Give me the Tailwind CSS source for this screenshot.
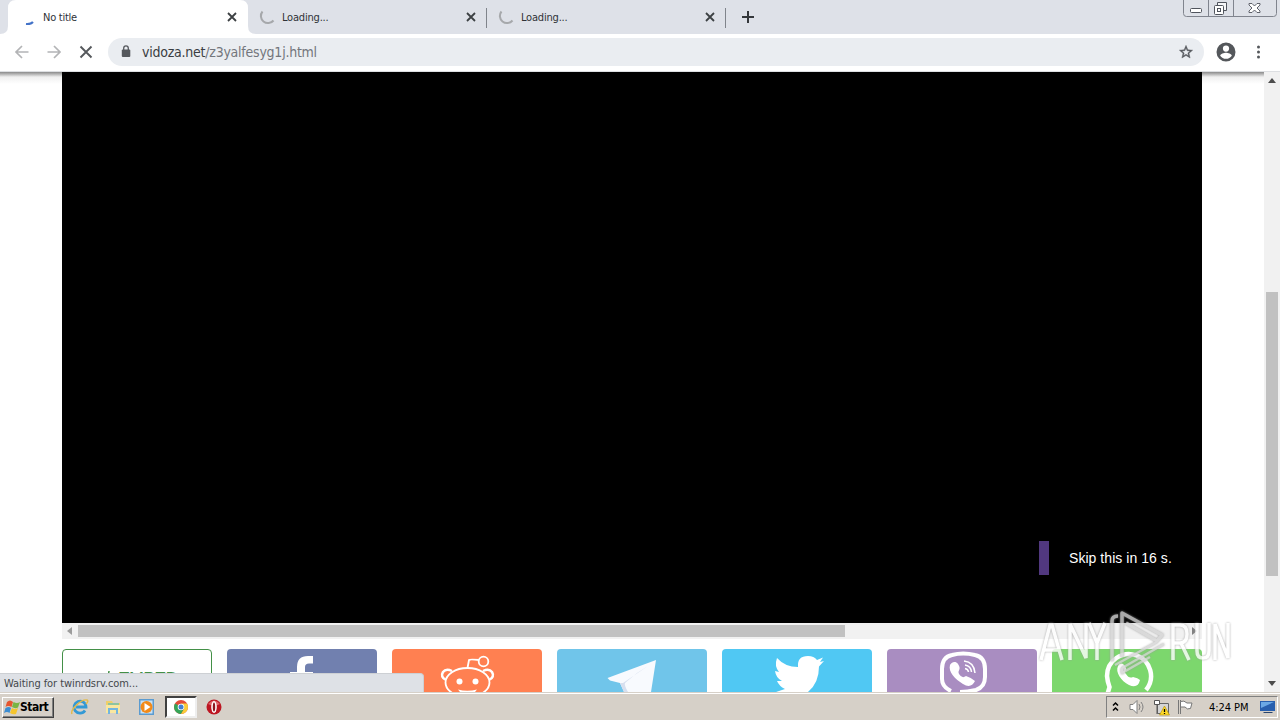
<!DOCTYPE html>
<html lang="en">
<head>
    <meta charset="UTF-8">
    <meta name="viewport" content="width=device-width, initial-scale=1.0">
    <title>No title</title>
    <script src="https://cdn.jsdelivr.net/npm/@tailwindcss/browser@4"></script>
</head>
<body class="w-[1280px] h-[720px] overflow-hidden flex flex-col bg-white font-['DejaVu_Sans_Condensed','DejaVu_Sans',sans-serif]">

    <!-- Tab strip -->
    <header class="relative h-[34px] shrink-0 bg-[#dee1e8] flex text-[11px] text-[#2f3237]">
        <svg class="absolute left-0 top-0" width="256" height="34"><path d="M0 34 Q8 34 8 26 V8 Q8 0 16 0 H240 Q248 0 248 8 V26 Q248 34 256 34Z" fill="#fff"/></svg>
        <div class="relative w-[248px] flex items-center pl-5 pr-[11px]">
            <svg class="w-4 h-4 mr-[7px]" viewBox="0 0 16 16" fill="none"><path d="M6 15Q10.500 15.500 13 13" stroke="#4272c8" stroke-width="2.200"/></svg>
            <span class="flex-1 pt-[2px] tracking-[-0.25px]">No title</span>
            <svg width="10" height="10" viewBox="0 0 10 10" stroke="#3c4043" stroke-width="1.800"><path d="M1 1l8 8M9 1l-8 8"/></svg>
        </div>
        <div class="relative w-[239px] flex items-center pl-[11px] pr-[11px]">
            <svg class="w-4 h-4 mr-[7px]" viewBox="0 0 16 16" fill="none"><path d="M3.500 2.500A7 7 0 1 0 14.500 11.500" stroke="#a6a8ab" stroke-width="2"/></svg>
            <span class="flex-1 pt-[2px] tracking-[-0.2px]">Loading...</span>
            <svg width="10" height="10" viewBox="0 0 10 10" stroke="#3c4043" stroke-width="1.800"><path d="M1 1l8 8M9 1l-8 8"/></svg>
            <i class="absolute right-0 top-2 w-px h-5 bg-[#80848b]"></i>
        </div>
        <div class="relative w-[239px] flex items-center pl-[11px] pr-[11px]">
            <svg class="w-4 h-4 mr-[7px]" viewBox="0 0 16 16" fill="none"><path d="M3.500 2.500A7 7 0 1 0 14.500 11.500" stroke="#a6a8ab" stroke-width="2"/></svg>
            <span class="flex-1 pt-[2px] tracking-[-0.2px]">Loading...</span>
            <svg width="10" height="10" viewBox="0 0 10 10" stroke="#3c4043" stroke-width="1.800"><path d="M1 1l8 8M9 1l-8 8"/></svg>
            <i class="absolute right-0 top-2 w-px h-5 bg-[#80848b]"></i>
        </div>
        <svg class="mt-[11px] ml-4" width="12" height="12" stroke="#34373b" stroke-width="2"><path d="M6 0v12M0 6h12"/></svg>
        <!-- Window buttons -->
        <svg class="ml-auto mr-[3px]" width="94" height="18" fill="none" stroke="#80848e">
            <path d="M.5 0V13.500Q.5 16.500 3.500 16.500H90.500Q93.500 16.500 93.500 13.500V0M25.500 0V16M50.500 0V16"/>
            <g stroke="#50545d">
                <rect x="7.500" y="8.500" width="11" height="4" rx="1" fill="#fff"/>
                <path d="M34.500 6V2.500H43.500V10.500H40" fill="#f5f6f8"/>
                <rect x="31.500" y="5.500" width="9" height="9" rx="1" fill="#fff"/><rect x="34.500" y="8.500" width="3" height="3"/>
                <path d="M66 3.500h3l2.500 2.500 2.500-2.500h3v1.500L74 8l3 3v1.500h-3L71.500 10 69 12.500h-3V11l3-3-3-3z" fill="#fff" stroke-width=".9"/>
            </g>
        </svg>
    </header>

    <!-- Toolbar -->
    <div class="relative z-10 h-[38px] shrink-0 bg-white flex items-center pb-[2px] border-b border-[#dddfe2]">
        <svg width="108" height="36" fill="none" stroke-width="1.700">
            <path d="M28.500 18H16M22 12l-6 6 6 6M47.500 18H60M54 12l6 6-6 6" stroke="#b3b4b6"/>
            <path d="M80.500 12.500l11 11M91.500 12.500l-11 11" stroke="#55585c" stroke-width="1.900"/>
        </svg>
        <div class="w-[1096px] h-7 rounded-full bg-[#eaedf1] flex items-center pl-[13px] pr-[10px]">
            <svg class="mr-[11px]" width="10" height="13"><path d="M2.700 5V3.200a2.300 2.300 0 0 1 4.600 0V5" fill="none" stroke="#55585d" stroke-width="1.300"/><rect x=".8" y="4.500" width="8.500" height="7.500" rx="1" fill="#55585d"/></svg>
            <span class="flex-1 pt-[2px] text-[14px] tracking-[-0.24px] text-[#73767c]"><span class="text-[#3a3d42]">vidoza.net</span>/z3yalfesyg1j.html</span>
            <svg width="16" height="16" viewBox="0 0 24 24" fill="#55585d" stroke="#55585d" stroke-width=".6"><path d="M22 9.240l-7.190-.62L12 2 9.190 8.630 2 9.240l5.460 4.730L5.820 21 12 17.270 18.180 21l-1.630-7.030zM12 15.400l-3.760 2.270 1-4.280-3.320-2.880 4.380-.38L12 6.100l1.710 4.040 4.380.38-3.320 2.880 1 4.280z"/></svg>
        </div>
        <svg class="ml-[10px]" width="24" height="24" viewBox="0 0 24 24" fill="#54575b"><path d="M12 2.500a9.500 9.500 0 1 0 0 19 9.500 9.500 0 0 0 0-19zm0 3a3.100 3.100 0 1 1 0 6.200 3.100 3.100 0 0 1 0-6.200zm0 13.300a7 7 0 0 1-5.800-3.100c.1-1.900 3.900-2.900 5.800-2.900s5.700 1 5.800 2.900a7 7 0 0 1-5.800 3.100z"/></svg>
        <svg class="ml-[18px]" width="5" height="16" fill="#54575b"><circle cx="2.500" cy="3" r="1.500"/><circle cx="2.500" cy="8" r="1.500"/><circle cx="2.500" cy="13" r="1.500"/></svg>
    </div>

    <!-- Page -->
    <main class="relative h-[620px] shrink-0 flex overflow-hidden">
        <div class="w-[1264px] pl-[62px] bg-linear-to-b from-[#8b8b8b] via-[#f0f0f0] via-[5px] to-white to-[12px]">
            <div class="w-[1140px] h-[551px] bg-black flex items-end">
                <div class="ml-[977px] mb-12 flex items-center h-[34px] border-l-[10px] border-[#51387f] pl-5 font-['Liberation_Sans',sans-serif] text-[14px] tracking-[0.05px] text-white whitespace-nowrap">Skip this in 16 s.</div>
            </div>
            <div class="w-[1140px] h-4 bg-[#f1f1f1] flex items-center justify-between px-[5px]">
                <svg width="6" height="8"><path d="M5 0v8L0 4z" fill="#9c9c9c"/></svg>
                <i class="mr-auto ml-[5px] w-[767px] h-3 bg-[#c1c1c1]"></i>
                <svg width="6" height="8"><path d="M1 0v8l5-4z" fill="#808080"/></svg>
            </div>
            <div class="mt-[10px] w-[1140px] grid grid-cols-7 gap-[15px]">
                <div class="h-[54px] rounded-[4px] border border-[#439047] text-[#439047] font-['Liberation_Sans',sans-serif] text-[18px] leading-6 pt-[17px] pl-[43px] flex items-start">
                    <svg class="mt-[4px] mr-[4px]" width="8" height="10"><path d="M3 0L0 9M3 0v4" stroke="#439047"/></svg>
                    <span class="tracking-[-0.9px]">EMBED</span>
                </div>
                <div class="h-[54px] rounded-[4px] bg-[#7180af]"><svg width="150" height="43"><path d="M86 7V14.500H82Q78 14.500 78 18V23H86V31H78V43H70V31H63V23H70V18Q70 7 81 7Z" fill="#fff"/></svg></div>
                <div class="h-[54px] rounded-[4px] bg-[#ff8051]"><svg width="150" height="43" fill="none" stroke="#fff" stroke-width="1.800">
                    <path d="M75.500 19L77 11Q78 10 87 11"/><circle cx="91.500" cy="12.500" r="4.800"/>
                    <path d="M54 31Q48 28 51 23Q54 19 60 22M97 31Q103 28 100 23Q97 19 91 22" stroke-width="2.500"/>
                    <ellipse cx="75.500" cy="33.500" rx="22" ry="14.500"/><g fill="#fff" stroke="none"><circle cx="67.500" cy="32.500" r="3"/><circle cx="83.500" cy="32.500" r="3"/><path d="M66 40.500Q75 43 85 40.500L83 43H68Z"/></g>
                </svg></div>
                <div class="h-[54px] rounded-[4px] bg-[#70c5ea]"><svg width="150" height="43"><path d="M99 11L50.500 29L53 31.500L63 34L67 43H94Z" fill="#f8fafe"/><path d="M91 17L66 34L63 34L67 43H71Q67 36 68 34L80 24Z" fill="#d7dfef"/></svg></div>
                <div class="h-[54px] rounded-[4px] bg-[#50c8f3]"><svg width="150" height="43"><path d="M55 9Q63 18 76 18Q75 7 86 7Q92 7 95 11L101 8.500L98 13L102 12L97 17.500Q97 34 86 43H54L63 40Q57 37 55 32L60 32Q54 29 53 22L57 23Q52 17 55 9Z" fill="#fff"/></svg></div>
                <div class="h-[54px] rounded-[4px] bg-[#a98dc1]"><svg width="150" height="43" fill="none" stroke="#fff" stroke-width="4">
                    <path d="M64 42Q55 38 55 30V20Q55 8 65 6Q76 3 88 6Q98 8 98 20V28Q98 38 89 41Q80 43 73 43"/>
                    <path d="M63 16C64 14 68 11 71 15C75 21 70 21 72 25Q75 30 79 27Q85 29 88 32Q84 40 76 35C68 30 61 23 63 16Z" fill="#fff" stroke="none"/><path d="M77 12Q87 13 88 24M78 16Q84 17 84.500 23M78 19.500Q81 20 81.500 23" stroke-width="1.500"/>
                </svg></div>
                <div class="h-[54px] rounded-[4px] bg-[#7cd76d]"><svg width="150" height="43" fill="none" stroke="#fff" stroke-width="4.500">
                    <path d="M55.500 45L57.500 38Q55.500 33 55 27A22 22 0 1 1 94 41"/>
                    <path d="M66 17C68 13 72 14 74 19C75 22 71 22 74 25Q77 30 81 28Q86 29 88 31Q86 40 77 36C69 32 63 23 66 17Z" fill="#fff" stroke="none"/>
                </svg></div>
            </div>
        </div>
        <!-- Scrollbar -->
        <div class="w-4 h-full bg-[#f1f1f1] flex flex-col items-center justify-between py-[6px]">
            <svg width="8" height="5"><path d="M0 5h8L4 0z" fill="#4d4d4d"/></svg>
            <i class="w-3 h-[284px] mt-[209px] mb-auto bg-[#c1c1c1]"></i>
            <svg width="8" height="5"><path d="M0 0h8L4 5z" fill="#4d4d4d"/></svg>
        </div>

        <!-- Status bubble -->
        <div class="absolute left-0 bottom-0 w-[424px] h-[19px] rounded-tr-[4px] bg-[#dee1e6] border-t border-r border-[#cdd0d4] pl-[4px] pt-[2px] flex items-center text-[11px] tracking-[-0.07px] text-[#44474b]">Waiting for twinrdsrv.com...</div>

        <!-- Watermark -->
        <svg class="absolute left-[1038px] top-[535px] opacity-80 drop-shadow-[0_0_1px_#999]" width="200" height="75" fill="none" stroke="#fff" stroke-width="3.500">
            <path d="M3 53L12 18H14L24 53M6 43H20M32 53V17L48 51V16M51 16L59 36L67 16M59 36V53"/>
            <path d="M135 53V18H142Q149 18 149 27Q149 36 142 36H135M143 36L151 53M159 16V44Q159 51 165 51Q171 51 171 44V16M177 53V17L190 51V16"/>
            <g stroke="#d4d4d4" stroke-linejoin="round">
                <path d="M74 54V14Q74 9 80 9"/>
                <path d="M84 50V6L124 28L119 34L88 16"/>
                <path d="M119 35L77 58M126 37L84 61M84 61V66L112 50" stroke-width="2.500"/>
            </g>
        </svg>
    </main>

    <!-- Taskbar -->
    <footer class="h-7 shrink-0 bg-[#d6d0c8] border-t border-[#d6d0c8] shadow-[inset_0_1px_0_#fff] flex items-center pt-px text-black">
        <div class="ml-[2px] w-[52px] h-[21px] bg-[#d6d0c8] border border-t-white border-l-white border-r-[#404040] border-b-[#404040] shadow-[inset_-1px_-1px_0_#808080] flex items-center pl-px">
            <svg class="shrink-0" width="16" height="17" viewBox="0 0 16 17"><path d="M3 3Q6 0 9 3L7.500 8Q4 6 1.500 8Z" fill="#e6562f"/><path d="M9.500 3Q13 5 16 3L14 8.500Q11 10 8 8Z" fill="#79b544"/><path d="M1.500 9Q5 7 7 9L5.500 14Q3 12 0 14Z" fill="#3c8dd2"/><path d="M8 9Q11 11 14 9L12 15Q9 16 6 14Z" fill="#f5c52e"/></svg>
            <b class="text-[12px] tracking-[-0.5px]">Start</b>
        </div>
        <svg class="ml-[17px]" width="18" height="18" fill="none"><path d="M14 12.500A6 6 0 1 1 15 9H5" stroke="#3399d5" stroke-width="2.800"/><path d="M1 16C-1 12 10 1 16 2Q18 3 15 6" stroke="#e3ba4b" stroke-width="1.400"/></svg>
        <svg class="ml-4" width="17" height="17"><path d="M1 2h6l1 2h7v9H1z" fill="#efcf69"/><path d="M3 4h11v4H3z" fill="#8dc4a0"/><path d="M1 6h14v8H1z" fill="#f9e79f"/><path d="M3 15V9h10v6h-2v-4H5v4z" fill="#73b5df"/></svg>
        <svg class="ml-[17px]" width="17" height="17"><rect width="15" height="16" fill="#5b9bd0"/><rect x="1.500" y="1.500" width="12" height="13" fill="#c9e1f4"/><circle cx="7.500" cy="8" r="6" fill="#f28a19"/><path d="M5.500 4v8l6-4z" fill="#fff"/></svg>
        <div class="ml-[9px] w-8 h-[22px] bg-white border-2 border-t-[#404040] border-l-[#404040] border-b-[#eee] border-r-[#eee] flex items-center justify-center">
            <svg width="14" height="14" viewBox="0 0 14 14"><circle cx="7" cy="7" r="7" fill="#e44b38"/><path d="M1 3.500A7 7 0 0 0 7 14L10 9 7 7z" fill="#35a558"/><path d="M7 14A7 7 0 0 0 13 3.500H7L10 9z" fill="#f9cd39"/><circle cx="7" cy="7" r="3.300" fill="#fff"/><circle cx="7" cy="7" r="2.500" fill="#437fd3"/></svg>
        </div>
        <svg class="ml-[9px]" width="16" height="16"><circle cx="8" cy="8" r="7.500" fill="#bd1622"/><path d="M2 5Q8-2 14 5Q8 8 2 5" fill="#df656b"/><ellipse cx="8" cy="8" rx="2.800" ry="6" fill="#fff"/><ellipse cx="8" cy="8" rx="1.200" ry="4.500" fill="#8d1720"/></svg>

        <div class="ml-auto mr-[2px] w-[172px] h-[22px] border border-t-[#808080] border-l-[#808080] border-b-white border-r-white flex items-center pl-[5px] pr-px">
            <svg width="8" height="12" fill="none" stroke="#000" stroke-width="1.500"><path d="M1 4.500l2.500-2.500 2.500 2.500M1 9.500l2.500-2.500 2.500 2.500"/></svg>
            <svg class="ml-[9px]" width="17" height="16" fill="#fff" stroke="#808080"><path d="M1 5.500h3l4-4v13l-4-4H1z"/><path d="M10 5Q12 8 10 11M12 3Q16 8 12 13" fill="none"/></svg>
            <svg class="ml-[7px]" width="17" height="17"><path d="M4.500 4.500h11v10h-11z" fill="#d5d5d5" stroke="#666"/><path d="M1.500 1.500h5v4h-5zM4 6v9" fill="#fff" stroke="#555"/><path d="M11.500 7l5 9h-10z" fill="#ffda29" stroke="#af8b00" stroke-width=".6"/><path d="M11.500 10v3m0 1v1" stroke="#000" stroke-width="1.300"/></svg>
            <svg class="ml-[7px]" width="17" height="16" fill="#fff" stroke="#777"><path d="M1.500 1v14M3.500 1v14"/><path d="M3.500 2.500Q7 1 10 4H15L13.500 9.500Q10 11 8 8H3.500Z"/></svg>
            <span class="ml-[15px] pt-[2px] text-[11px] tracking-[-0.05px] whitespace-nowrap">4:24 PM</span>
            <svg class="ml-auto shrink-0" width="16" height="14"><path d="M0 1h15v10H0z" fill="#285fae"/><path d="M1 2h13L1 8z" fill="#6ba8e5"/><path d="M4 12h8l1 1H3z" fill="#29446d"/></svg>
        </div>
    </footer>
</body>
</html>
